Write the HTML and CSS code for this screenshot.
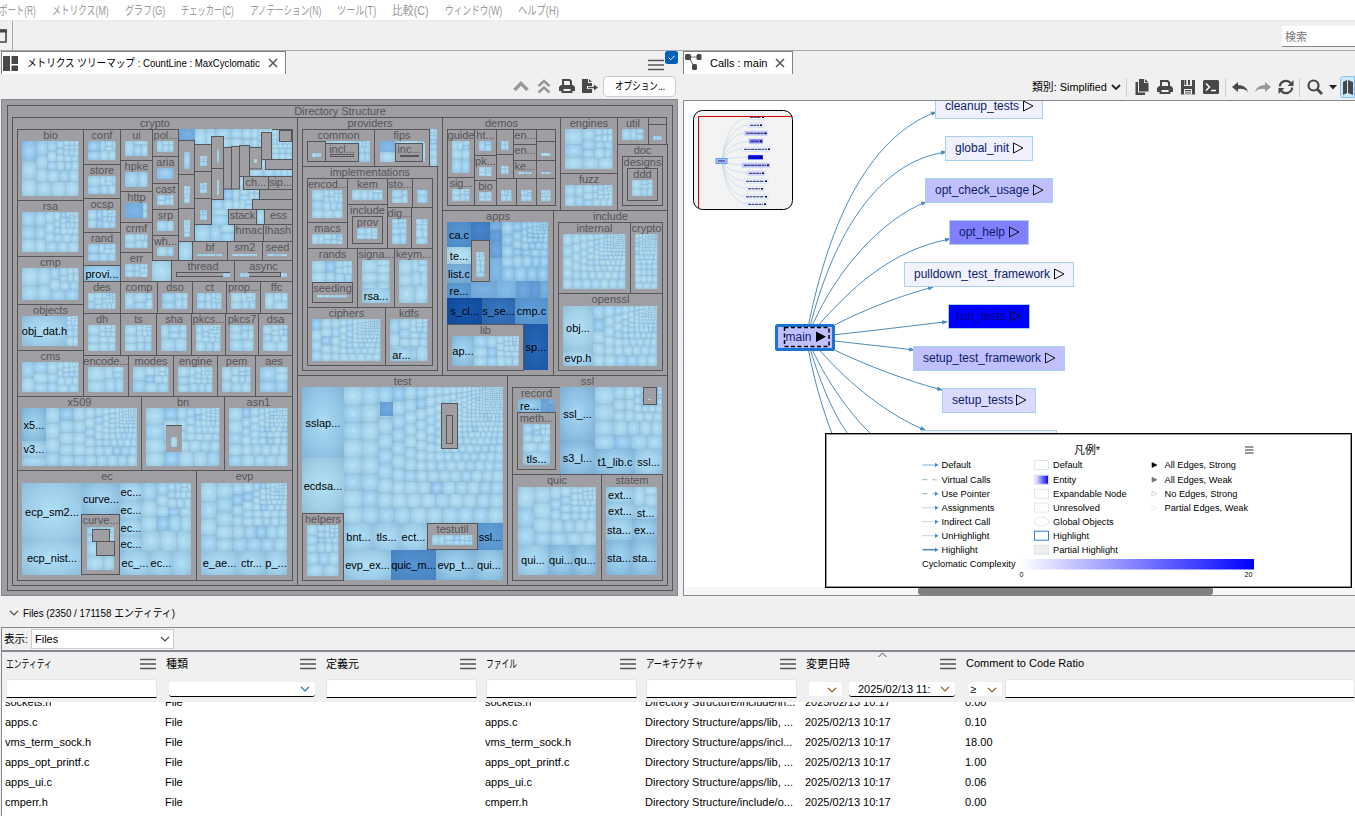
FILE: index.html
```html
<!DOCTYPE html>
<html lang="ja">
<head>
<meta charset="utf-8">
<title>Understand</title>
<link rel="stylesheet" href="styles.css">
</head>
<body>
<svg class="defs" width="0" height="0">
  <defs>
    <symbol id="i-print" viewBox="0 0 16 16"><path d="M3 7V1h8l2 2v4h-2V4L10 3H5v4zM2 7h12l2 2v4h-2.500v2h-11v-2H0V9zm2.500 4v2h7v-2z" fill-rule="evenodd"/></symbol>
    <symbol id="i-x" viewBox="0 0 10 10"><path d="M1 1l8 8M9 1l-8 8" fill="none" stroke="#555" stroke-width="1.500"/></symbol>
    <symbol id="i-menu" viewBox="0 0 16 12"><path d="M0 1.500h16M0 6h16M0 10.500h16" stroke="#555" stroke-width="1.600"/></symbol>
    <symbol id="i-down" viewBox="0 0 10 6"><path d="M1 .8l4 4 4-4" fill="none" stroke="currentColor" stroke-width="1.200"/></symbol>
    <radialGradient id="shade" cx=".5" cy=".5" r=".7"><stop offset="0" stop-color="#c0ecff" stop-opacity=".65"/><stop offset=".55" stop-color="#a4d0e6" stop-opacity=".3"/><stop offset="1" stop-color="#5c8ca8" stop-opacity=".3"/></radialGradient>
    <radialGradient id="shade-deep" cx=".5" cy=".5" r=".7"><stop offset="0" stop-color="#9cf" stop-opacity=".12"/><stop offset="1" stop-color="#234" stop-opacity=".1"/></radialGradient>
    <linearGradient id="ramp"><stop offset="0" stop-color="#fff"/><stop offset="1" stop-color="#00f"/></linearGradient>
    <marker id="arrow" viewBox="0 0 6 6" refX="5" refY="3" markerWidth="6" markerHeight="6" orient="auto" markerUnits="userSpaceOnUse"><path d="M0 .8L6 3 0 5.200z" fill="#4c8cbc"/></marker>
  </defs>
</svg>
<nav class="menubar">
  <span class="cut" data-w="37">ポート(R)</span><span data-w="57">メトリクス(M)</span><span data-w="40">グラフ(G)</span><span data-w="53">チェッカー(C)</span><span data-w="71">アノテーション(N)</span><span data-w="39">ツール(T)</span><span data-w="37">比較(C)</span><span data-w="57">ウィンドウ(W)</span><span data-w="41">ヘルプ(H)</span>
</nav>
<div class="mainbar">
  <div class="dockicon"><svg width="8" height="14"><path d="M0 1h6v12H0" fill="none" stroke="#444" stroke-width="1.600"/><path d="M0 2h6.800" stroke="#444" stroke-width="3"/></svg></div>
  <div class="search"><span data-w="22">検索</span></div>
</div>
<main class="panes">
  <section class="pane left">
    <div class="tabs">
      <div class="tab tab-map">
        <svg width="15" height="15"><path d="M0 0h7v15H0zM8.500 0H15v8H8.500zM8.500 9.500H15V15H8.500z" fill="#484848"/></svg>
        <span data-w="233">メトリクス ツリーマップ : CountLine : MaxCyclomatic</span>
        <svg width="10" height="10"><use href="#i-x"/></svg>
      </div>
      <div class="tabend"><svg class="ham" width="16" height="12"><use href="#i-menu"/></svg><svg width="13" height="13"><rect width="13" height="13" rx="2.500" fill="#005fb8"/><path d="M3.500 6.500l2.200 2.200 4-4" fill="none" stroke="#fff"/></svg></div>
    </div>
    <div class="tools">
      <svg width="16" height="16"><path d="M1.500 12L8 5.500l6.500 6.500" fill="none" stroke="#999" stroke-width="3.400"/></svg>
      <svg width="16" height="16"><path d="M2.500 8L8 3l5.500 5M2.500 14.500L8 9.500l5.500 5" fill="none" stroke="#999" stroke-width="2.600"/></svg>
      <svg width="16" height="16" fill="#484848"><use href="#i-print"/></svg>
      <svg width="16" height="16" fill="#484848"><path d="M0 1h6v4h4v3H5v3h5v4H0zM7 1l3 3H7z"/><path d="M6 8.800h6V6.500l4 3-4 3v-2.200H6z"/></svg>
      <button class="opt"><span data-w="50">オプション...</span></button>
    </div>
    <svg id="treemap" width="677" height="497" viewBox="1 99 677 497"></svg>
  </section>
  <section class="pane right">
    <div class="tabs">
      <div class="tab tab-calls">
        <svg class="up" width="17" height="17" fill="#484848"><path d="M2.500 4h12M3.500 4l6 10" stroke="#777" stroke-width="1.200"/><rect x="0" y="1" width="6" height="6" rx="1.500"/><rect x="11.500" y="1" width="5" height="6" rx="1.500"/><rect x="7" y="11" width="5" height="6" rx="1.500"/></svg>
        <span data-w="57">Calls : main</span>
        <svg width="10" height="10"><use href="#i-x"/></svg>
      </div>
    </div>
    <div class="tools rtools">
      <span data-w="75">類別: Simplified</span>
      <svg class="g4" width="10" height="7"><path d="M1 1l4 4 4-4" fill="none" stroke="#222" stroke-width="1.800"/></svg>
      <i class="sep s1"></i>
      <svg width="16" height="16" fill="#484848"><path d="M5 0h5v4h4.500v8.500H5zM11 0l3.500 3.300H11zM1.500 3H4v10.500h7V16H1.500z"/></svg>
      <svg width="16" height="16" fill="#484848"><use href="#i-print"/></svg>
      <svg width="16" height="16"><path d="M1 1h14v14.500H1z" fill="#484848"/><path d="M4 1h8v6H4zM4 10h8v5.500H4z" fill="#eee"/><path d="M4.500 1h1.800v5H4.500zM8 1h2v5H8zM5 11h6v1.200H5zM5 13.500h6v1H5z" fill="#484848"/></svg>
      <svg width="16" height="16"><rect y="1" width="16" height="14" rx="1.500" fill="#484848"/><path d="M3 4.500L6.500 8 3 11.500M8 11.500h5" fill="none" stroke="#fff" stroke-width="1.500"/></svg>
      <i class="sep s2"></i>
      <svg width="16" height="16"><path d="M0 8l6-5v3q8 0 10 7-4-4-10-3v3z" fill="#484848"/></svg>
      <svg width="16" height="16"><path d="M16 8l-6-5v3Q2 6 0 13q4-4 10-3v3z" fill="#999"/></svg>
      <svg width="16" height="16"><path d="M1.800 7.500a6.300 6.300 0 0 1 11-3.500M14.200 8.500a6.300 6.300 0 0 1-11 3.500" fill="none" stroke="#484848" stroke-width="2.200"/><path d="M15.500 1v6h-6zM.5 15V9h6z" fill="#484848"/></svg>
      <i class="sep s3"></i>
      <svg width="16" height="16"><circle cx="6.500" cy="6.500" r="5" fill="none" stroke="#484848" stroke-width="2.200"/><path d="M10 10l5 5" stroke="#484848" stroke-width="2.800"/></svg>
      <svg class="car" width="8" height="5"><path d="M0 0h8L4 4.500z" fill="#222"/></svg>
      <div class="mapbtn"><svg width="16" height="16" fill="#484848"><path d="M0 3l4-2v13l-4 2zM5 1l5 2v13l-5-2zM11 3l5-2v13l-5 2z"/></svg></div>
    </div>
    <svg id="graph" width="672" height="496" viewBox="683 100 672 496"></svg>
  </section>
</main>
<section class="files">
  <h2><svg width="10" height="6"><use href="#i-down"/></svg><span data-w="152">Files (2350 / 171158 エンティティ)</span></h2>
  <div class="show"><span data-w="24">表示:</span><div class="select">Files<svg width="10" height="6"><use href="#i-down"/></svg></div></div>
  <div id="head" class="head"></div>
  <div id="rows" class="rows"></div>
</section>
<script src="script.js"></script>
</body>
</html>
```
FILE: styles.css
```css
* { box-sizing: border-box; }
body {
  margin: 0;
  width: 1355px;
  height: 816px;
  overflow: hidden;
  background: #f0f0f0;
  color: #000;
  font: 11px/14px "Liberation Sans", "Noto Sans CJK JP", sans-serif;
}
svg { display: block; flex: none; }
.defs { position: absolute; }
text { font-family: "Liberation Sans", "Noto Sans CJK JP", sans-serif; }
[data-w] { display: block; flex: none; white-space: nowrap; }
[data-w] > span { display: inline-block; transform-origin: 0 50%; }

.menubar { display: flex; gap: 16px; height: 21px; padding-top: 4px; background: #fff; color: #999; border-bottom: 1px solid #e8e8e8; font-size: 12px; }
.cut { margin-left: -1px; }
.mainbar { display: flex; justify-content: space-between; height: 30px; border-bottom: 1px solid #a8a8a8; }
.dockicon { width: 13px; padding-top: 8px; border-right: 1px solid #a8a8a8; }
.search { width: 73px; height: 21px; margin-top: 5px; padding: 4px 3px; background: #fff; border-bottom: 1px solid #868686; color: #777; }

.panes { display: flex; gap: 5px; height: 545px; padding-left: 1px; }
.left { width: 677px; }
.right { width: 672px; }
.tabs { display: flex; justify-content: space-between; height: 23px; }
.tab { display: flex; align-items: center; background: #fff; border: 1px solid #828282; border-bottom: 0; }
.tab-map { width: 285px; padding-left: 1px; gap: 8px; }
.tab-map > svg:first-child { margin-right: 1px; }
.tab-calls { width: 110px; padding-left: 1px; gap: 8px; }
.up { align-self: flex-start; margin-top: 1px; }
.tabend { display: flex; gap: 1px; }
.ham { margin-top: 8px; }
.tools { display: flex; align-items: center; justify-content: flex-end; gap: 7px; height: 25px; padding-right: 2px; }
.left .tools { padding-bottom: 1px; }
.opt { width: 73px; height: 21px; margin-left: -2px; padding: 0 0 0 11px; background: #fdfdfd; border: 1px solid #ccc; border-radius: 4px; font: inherit; text-align: left; }
.rtools { height: 26px; justify-content: flex-start; padding: 0 0 0 349px; }
.g4 { margin-left: -3px; }
.sep { width: 1px; height: 19px; background: #ccc; }
.s1 { margin-left: -2px; }
.s2 { margin-left: -1px; }
.s3 { margin-left: -2px; }
.car { margin-left: -1px; }
.mapbtn { width: 20px; height: 22px; padding: 2px; margin-left: -4px; background: #cce8ff; border: 1px solid #84c2f0; border-radius: 3px 0 0 3px; overflow: hidden; }

.files { display: flex; flex-direction: column; height: 220px; }
.files h2 { display: flex; align-items: center; gap: 4px; height: 31px; margin: 0; padding: 2px 0 0 9px; font: inherit; }
h2 svg, .select svg { color: #444; }
.show { display: flex; align-items: center; gap: 3px; height: 25px; margin-left: 1px; padding-left: 2px; border: solid #828790; border-width: 1px 0 2px 1px; }
.select { display: flex; align-items: center; justify-content: space-between; width: 143px; height: 20px; padding: 0 3px; background: #fff; border: 1px solid #ccc; }
.head { display: flex; height: 50px; margin-left: 1px; border-left: 1px solid #828790; padding: 5px 0 0 4px; }
.col { flex: none; width: 160px; }
.col:last-child { width: 389px; }
.cap { display: flex; justify-content: space-between; align-items: center; height: 14px; width: 150px; }
.col:last-child .cap { height: 11px; }
.field { width: 151px; height: 19px; margin-top: 8px; background: #fff; border: 1px solid #e5e5e5; border-bottom-color: #000; border-radius: 3px 3px 0 0; }
.pick { display: flex; align-items: center; justify-content: flex-end; width: 146px; height: 15px; margin: 11px 0 0 3px; padding-right: 5px; background: #fff; border-bottom: 1px solid #000; border-radius: 3px; color: #1c6ea5; }
.duo { display: flex; gap: 7px; height: 27px; }
.op { display: flex; flex: none; align-items: center; justify-content: space-between; width: 33px; height: 14px; margin: 11px 0 0 3px; padding: 2px 5px 0 1px; background: #fff; border-radius: 3px; color: #8a5a1c; }
.op b, .date b { color: #000; font-weight: 400; }
.op b { margin-top: -3px; }
.date { display: flex; align-items: center; justify-content: space-between; width: 106px; height: 15px; margin-top: 11px; padding: 0 5px 0 9px; background: #fff; border-bottom: 1px solid #000; border-radius: 3px; color: #8a5a1c; }
.duo .field { width: 360px; margin-left: -4px; }
.col:last-child .duo { margin-top: 3px; }
.sort { position: absolute; left: 877px; top: 652px; }
.rows { height: 114px; margin-left: 1px; background: #fff; border-left: 1px solid #828790; overflow: hidden; }
.row { display: flex; height: 20px; line-height: 20px; padding-left: 3px; }
.row:first-child { margin-top: -10px; }
.row span { width: 160px; flex: none; white-space: nowrap; }
```
FILE: script.js
```js
function fit(root) {
  root.querySelectorAll('[data-w]').forEach(el => {
    const s = document.createElement('span');
    s.textContent = el.textContent;
    el.textContent = '';
    el.append(s);
    const w = +el.dataset.w;
    const k = w / s.offsetWidth;
    s.style.transform = `scaleX(${k})`;
    el.style.width = w + 'px';
  });
}

// ---------- treemap ----------
const out = [];
let seed = 7;
const rnd = () => (seed = (seed * 16807) % 2147483647) / 2147483647;
const rect = (x, y, w, h, a) => out.push(`<rect x="${x.toFixed(1)}" y="${y.toFixed(1)}" width="${w.toFixed(1)}" height="${h.toFixed(1)}" ${a}/>`);
const label = (x, y, t, c) => out.push(`<text x="${x}" y="${y}" font-size="11" text-anchor="middle" fill="${c}">${t}</text>`);
const PALE = ['#a8d6ee', '#a6d4ec', '#a0d2f0', '#aad8ee', '#9ccef0'];
const BLUE = ['#6aa6de', '#76b0e2', '#629edA', '#80bcea', '#70aae2'];

function cell(x, y, w, h, color) {
  const deep = parseInt(color.slice(1, 3), 16) < 0x84;
  rect(x, y, w, h, `fill="${color}"`);
  rect(x, y, w, h, `fill="url(#shade${deep ? '-deep' : ''})"`);
}
function cells(x1, y1, x2, y2, n = 1, pal = PALE) {
  let x = x1, y = y1, w = x2 - x1, h = y2 - y1;
  const k = Math.log(n + 1) * 0.85;
  let ws = Array.from({ length: n }, (_, i) => Math.exp(-k * i / n));
  const sum = ws.reduce((a, b) => a + b, 0);
  ws = ws.map(v => v * w * h / sum);
  while (ws.length) {
    const side = Math.min(w, h);
    let best = Infinity, m = 0, s = 0;
    for (let i = 0; i < ws.length; i++) {
      s += ws[i];
      const t = s / side;
      const r = Math.max(t * t / ws[i], ws[0] / (t * t));
      if (r > best) { s -= ws[i]; break; }
      best = r; m = i + 1;
    }
    const t = s / side;
    let p = 0;
    for (const a of ws.slice(0, m)) {
      const l = a / t;
      const c = rnd() < 0.025 && pal === PALE ? '#8cc2ee' : pal[Math.floor(rnd() * pal.length)];
      if (w > h) cell(x, y + p, t, l, c);
      else cell(x + p, y + h - t, l, t, c);
      p += l;
    }
    if (w > h) { x += t; w -= t; } else h -= t;
    ws = ws.slice(m);
  }
}
function box(x1, y1, x2, y2, name = '', n = 0) {
  rect(x1, y1, x2 - x1, y2 - y1, 'fill="#9f9ea3" stroke="#565659"');
  if (name) label((x1 + x2) / 2, y1 + 9.5, name, '#555558');
  if (n) cells(x1 + 4.5, y1 + 11.5, x2 - 5, y2 - 4.5, n);
}
function leaf(x1, y1, x2, y2, name = '', color = '#9fd0ee') {
  cell(x1, y1, x2 - x1, y2 - y1, color);
  if (name) label((x1 + x2) / 2, (y1 + y2) / 2 + 4, name, '#000');
}
const B = list => list.forEach(a => box(...a));
const C = list => list.forEach(a => cells(...a));
const L = list => list.forEach(a => leaf(...a));

rect(1.5, 99.5, 676, 496, 'fill="#9f9ea3" stroke="#828790"');
B([[7.5, 105.5, 672.5, 590.5, 'Directory Structure'], [12.5, 117.5, 297.5, 585.5, 'crypto'],
  [17.5, 129.5, 292.5, 580.5],
  [17.5, 129.5, 83.5, 200.5, 'bio', 32], [17.5, 200.5, 83.5, 256.5, 'rsa', 36], [17.5, 256.5, 83.5, 304.5, 'cmp', 16],
  [17.5, 304.5, 83.5, 350.5, 'objects'], [17.5, 350.5, 83.5, 396.5, 'cms', 25],
  [83.5, 129.5, 120.5, 164.5, 'conf', 8], [83.5, 164.5, 120.5, 198.5, 'store', 8], [83.5, 198.5, 120.5, 232.5, 'ocsp', 14],
  [83.5, 232.5, 120.5, 265.5, 'rand', 9], [83.5, 281.5, 120.5, 313.5, 'des', 20], [83.5, 313.5, 120.5, 355.5, 'dh', 15],
  [83.5, 355.5, 128.5, 396.5, 'encode...', 7],
  [120.5, 129.5, 152.5, 160.5, 'ui', 4], [120.5, 160.5, 152.5, 191.5, 'hpke', 2], [120.5, 191.5, 152.5, 222.5, 'http'],
  [120.5, 222.5, 152.5, 252.5, 'crmf', 7], [120.5, 252.5, 152.5, 281.5, 'err', 9],
  [152.5, 129.5, 178.5, 156.5, 'pol...', 5], [152.5, 156.5, 178.5, 183.5, 'aria', 1], [152.5, 183.5, 178.5, 209.5, 'cast', 6],
  [152.5, 209.5, 178.5, 235.5, 'srp', 2], [152.5, 235.5, 178.5, 260.5, 'wh...', 2],
  [120.5, 281.5, 157.5, 313.5, 'comp', 5], [157.5, 281.5, 192.5, 313.5, 'dso', 6], [192.5, 281.5, 226.5, 313.5, 'ct', 12],
  [226.5, 281.5, 260.5, 313.5, 'prop...', 8], [260.5, 281.5, 292.5, 313.5, 'ffc', 4],
  [120.5, 313.5, 156.5, 355.5, 'ts', 14], [156.5, 313.5, 191.5, 355.5, 'sha', 7], [191.5, 313.5, 225.5, 355.5, 'pkcs...', 20],
  [225.5, 313.5, 258.5, 355.5, 'pkcs7', 8], [258.5, 313.5, 292.5, 355.5, 'dsa', 12],
  [128.5, 355.5, 173.5, 396.5, 'modes', 12], [173.5, 355.5, 217.5, 396.5, 'engine', 22], [217.5, 355.5, 255.5, 396.5, 'pem', 12],
  [255.5, 355.5, 292.5, 396.5, 'aes', 5],
  [17.5, 396.5, 141.5, 470.5, 'x509'], [141.5, 396.5, 224.5, 470.5, 'bn', 50], [224.5, 396.5, 292.5, 470.5, 'asn1', 75],
  [17.5, 470.5, 196.5, 580.5, 'ec'], [196.5, 470.5, 292.5, 580.5, 'evp']]);
C([[67, 316, 78, 346, 14], [46, 408, 137, 466, 100], [142, 483, 191, 551, 26], [201, 483, 287, 551, 75]]);
L([[22, 316, 67, 346, 'obj_dat.h'], [84, 266, 120, 281, 'provi...', '#94cbf2'], [125, 203, 143, 218, '', '#79b6ea'], [143, 203, 147, 211], [143, 211, 147, 218],
  [22, 408, 46, 441, 'x5...', '#85bde2'], [22, 441, 46, 457, 'v3...'], [22, 457, 46, 466],
  [22, 483, 82, 541, 'ecp_sm2...'], [22, 541, 82, 575, 'ecp_nist...'], [82, 483, 120, 514, 'curve...', '#92c5e8'],
  [120, 483, 142, 501, 'ec...'], [120, 501, 142, 519, 'ec...'], [120, 519, 142, 536, 'ec...'], [120, 536, 142, 551, 'ec...'],
  [120, 551, 150, 575, 'ec_...'], [150, 551, 172, 575, 'ec...'], [172, 551, 191, 575],
  [201, 551, 238, 575, 'e_ae...'], [238, 551, 265, 575, 'ctr...'], [265, 551, 287, 575, 'p_...']]);
rect(166, 425, 16, 27, 'fill="#9f9ea3"');
out.push('<path d="M166 425.500h16" stroke="#565659"/>');
B([[81.5, 514.5, 119.5, 574.5, 'curve...']]);
C([[171, 437, 177, 447, 1], [87, 527, 114, 542, 8], [87, 542, 114, 556, 3], [87, 556, 114, 570, 2]]);
B([[92.5, 529.5, 109.5, 541.5], [96.5, 541.5, 114.5, 555.5]]);

// packed corner of crypto
rect(179, 130, 113, 131, 'fill="#9f9ea3"');
C([[195, 129, 272, 147, 18], [272, 130, 292, 160, 40], [249, 169, 292, 176, 5], [240, 176, 243, 189, 1], [224, 189, 259, 200, 8],
  [212, 200, 252, 210, 6], [212, 209, 228, 225, 2], [257, 210, 264, 225, 1], [195, 225, 234, 242, 4], [179, 242, 192, 261, 1],
  [152, 261, 171, 281, 1], [261, 159, 266, 169, 1]]);
L([[179, 129, 195, 140, '', '#72afe4']]);
B([[178.5, 140.5, 194.5, 174.5], [178.5, 174.5, 194.5, 208.5], [178.5, 208.5, 194.5, 241.5],
  [194.5, 144.5, 211.5, 171.5], [194.5, 171.5, 211.5, 198.5], [194.5, 198.5, 211.5, 224.5],
  [211.5, 136.5, 223.5, 168.5], [211.5, 168.5, 223.5, 199.5], [223.5, 147.5, 231.5, 189], [231.5, 146.5, 239.5, 189],
  [239.5, 145.5, 249.5, 176.5], [249.5, 147.5, 261.5, 169], [261.5, 132.5, 271.5, 159.5], [279.5, 130.5, 291.5, 141.5],
  [265.5, 159.5, 292.5, 169.5], [243.5, 176.5, 268.5, 189.5, 'ch...'], [268.5, 176.5, 292.5, 189.5, 'sip...'],
  [259.5, 189.5, 292.5, 199.5], [252.5, 199.5, 292.5, 209.5], [228.5, 209.5, 256.5, 224.5, 'stack'], [264.5, 209.5, 292.5, 224.5, 'ess'],
  [234.5, 224.5, 263.5, 241.5, 'hmac'], [263.5, 224.5, 292.5, 241.5, 'lhash'],
  [192.5, 241.5, 227.5, 260.5, 'bf'], [227.5, 241.5, 262.5, 260.5, 'sm2'], [262.5, 241.5, 292.5, 260.5, 'seed'],
  [171.5, 260.5, 234.5, 281.5, 'thread'], [234.5, 260.5, 292.5, 281.5, 'async'], [176.5, 272.5, 229.5, 276.5], [248.5, 272.5, 280.5, 276.5]]);
C([[184, 152, 190, 169, 1], [184, 186, 190, 203, 6], [184, 220, 190, 237, 7], [200, 156, 207, 166, 8], [200, 183, 207, 193, 8],
  [200, 210, 207, 220, 6], [217, 149, 219, 163, 1], [217, 180, 219, 195, 4], [254, 159, 257, 163, 1],
  [197, 254, 222, 256, 10], [232, 254, 257, 256, 6], [267, 254, 287, 256, 4], [223, 273, 230, 277, 2], [240, 273, 249, 277, 3], [281, 273, 287, 277, 2]]);

// providers, demos, engines, fuzz, util, doc
B([[297.5, 117.5, 442.5, 375.5, 'providers'], [302.5, 129.5, 374.5, 166.5, 'common'], [374.5, 129.5, 429.5, 166.5, 'fips'],
  [307.5, 141.5, 325.5, 161.5], [302.5, 166.5, 437.5, 370.5, 'implementations'],
  [307.5, 178.5, 347.5, 222.5, 'encod...', 18], [307.5, 222.5, 347.5, 248.5, 'macs', 10], [347.5, 178.5, 387.5, 204.5, 'kem', 6],
  [347.5, 204.5, 387.5, 248.5, 'include'], [352.5, 216.5, 382.5, 243.5, 'prov', 8], [387.5, 178.5, 412.5, 207.5, 'sto...', 4],
  [412.5, 178.5, 432.5, 207.5, '', 2], [387.5, 207.5, 411.5, 248.5, 'dig...', 10], [411.5, 207.5, 432.5, 248.5, '', 8],
  [307.5, 248.5, 357.5, 307.5, 'rands'], [312.5, 282.5, 352.5, 302.5, 'seeding'], [357.5, 248.5, 394.5, 307.5, 'signa...', 7],
  [394.5, 248.5, 432.5, 307.5, 'keym...', 9], [307.5, 307.5, 385.5, 365.5, 'ciphers', 110], [385.5, 307.5, 432.5, 365.5, 'kdfs', 20],
  [442.5, 117.5, 560.5, 210.5, 'demos'], [447.5, 129.5, 474.5, 177.5, 'guide', 8], [447.5, 177.5, 474.5, 205.5, 'sig...', 7],
  [474.5, 129.5, 496.5, 155.5, 'ht...', 3], [474.5, 155.5, 496.5, 180.5, 'pk...', 6], [474.5, 180.5, 496.5, 205.5, 'bio', 6],
  [496.5, 129.5, 513.5, 154.5, '', 4], [496.5, 154.5, 513.5, 178.5, '', 4], [513.5, 129.5, 536.5, 144.5, 'en...'],
  [513.5, 144.5, 536.5, 160.5, 'en...'], [513.5, 160.5, 536.5, 178.5, 'ke...', 3], [536.5, 129.5, 555.5, 141.5],
  [536.5, 141.5, 555.5, 160.5, '', 1], [536.5, 160.5, 555.5, 178.5, '', 4], [496.5, 178.5, 516.5, 205.5, '', 6],
  [516.5, 178.5, 536.5, 205.5, '', 6], [536.5, 178.5, 555.5, 205.5, '', 9],
  [560.5, 117.5, 617.5, 173.5, 'engines', 18], [560.5, 173.5, 617.5, 210.5, 'fuzz', 24], [617.5, 117.5, 648.5, 144.5, 'util', 4],
  [648.5, 117.5, 666.5, 124.5], [648.5, 124.5, 666.5, 144.5, '', 3], [617.5, 144.5, 667.5, 210.5, 'doc'],
  [622.5, 156.5, 662.5, 205.5, 'designs'], [627.5, 168.5, 657.5, 200.5, 'ddd', 8]]);
C([[312, 153, 321, 157, 3], [326, 141, 359, 144, 1], [359, 141, 370, 162, 8], [380, 152, 395, 162, 1], [395, 141, 424, 144, 1],
  [423, 143, 425, 162, 1], [430, 129, 437, 166, 8], [312, 261, 352, 282, 12], [317, 295, 347, 297.5, 8]]);
L([[380, 141, 395, 152, '', '#82bdeb'], [362, 288, 390, 303, 'rsa...'], [390, 348, 413, 361, 'ar...']]);
B([[325.5, 143.5, 358.5, 161.5, 'incl...'], [330.5, 154.5, 353.5, 156.5], [395.5, 143.5, 422.5, 161.5, 'inc...'], [400.5, 155.5, 418.5, 156.5]]);

// apps and include
B([[442.5, 210.5, 553.5, 375.5, 'apps'], [553.5, 210.5, 667.5, 375.5, 'include'], [558.5, 222.5, 630.5, 293.5, 'internal', 130],
  [630.5, 222.5, 662.5, 293.5, 'crypto', 100], [558.5, 293.5, 662.5, 370.5, 'openssl']]);
C([[490, 222, 502, 281, 4, BLUE], [502, 222, 548, 281, 52, ['#88c2ec', '#90c8ee', '#98ccec', '#86beea']], [471, 281, 548, 298, 5, BLUE], [593, 306, 657, 366, 100]]);
L([[447, 222, 471, 247, 'ca.c', '#4e92d2'], [471, 222, 490, 240, '', '#3f7fc6'], [447, 247, 471, 264, 'te...', '#b2dcee'],
  [447, 264, 471, 283, 'list.c', '#7ab2dd'], [447, 283, 471, 298, 're...', '#5a9bd6'], [447, 298, 482, 324, 's_cl...', '#0a4ba4'],
  [482, 298, 515, 324, 's_se...', '#2c6cb8'], [515, 298, 548, 324, 'cmp.c', '#5a9ad8'], [524, 324, 548, 370, 'sp...', '#1a5cb0'],
  [563, 306, 593, 350, 'obj...', '#a4d3ea'], [563, 350, 593, 366, 'evp.h']]);
B([[471.5, 240.5, 489.5, 281.5, '', 12], [447.5, 324.5, 523.5, 370.5, 'lib']]);
C([[474, 336, 519, 366, 26]]);
L([[452, 336, 474, 366, 'ap...', '#8cc0e6']]);

// test
B([[297.5, 375.5, 507.5, 585.5, 'test'], [302.5, 513.5, 343.5, 580.5, 'helpers', 24]]);
C([[344, 387, 503, 523, 330]]);
L([[302, 387, 344, 458, 'sslap...', '#90c5ea'], [302, 458, 344, 513, 'ecdsa...', '#a4d3ea'], [380, 402, 393, 416, '', '#69a7e0'],
  [344, 523, 373, 550, 'bnt...'], [373, 523, 400, 550, 'tls...'], [400, 523, 427, 550, 'ect...'], [477, 523, 503, 550, 'ssl...', '#5c9cd8'],
  [344, 550, 391, 580, 'evp_ex...'], [391, 550, 436, 580, 'quic_m...', '#4c8cce'], [436, 550, 475, 580, 'evp_t...', '#86bce4'],
  [475, 550, 503, 580, 'qui...', '#8cc0e6']]);
B([[427.5, 523.5, 477.5, 549.5, 'testutil', 14], [441.5, 403.5, 457.5, 448.5], [446.5, 415.5, 452.5, 443.5]]);

// ssl
B([[507.5, 375.5, 667.5, 585.5, 'ssl'], [512.5, 387.5, 560.5, 474.5, 'record'], [517.5, 412.5, 555.5, 469.5, 'meth...'],
  [512.5, 474.5, 601.5, 580.5, 'quic'], [601.5, 474.5, 662.5, 580.5, 'statem']]);
C([[541, 399, 555, 412, 3, BLUE], [523, 424, 550, 452, 12], [595, 387, 662, 449, 40], [518, 487, 596, 545, 44], [634, 487, 657, 506, 3]]);
L([[518, 399, 541, 412, 're...', '#86bce6'], [523, 452, 550, 465, 'tls...'], [560, 387, 595, 441, 'ssl_...', '#86bce4'],
  [560, 441, 595, 474, 's3_l...', '#84b8e2'], [595, 449, 635, 474, 't1_lib.c', '#8cc0e6'], [635, 449, 662, 474, 'ssl...'],
  [518, 545, 548, 575, 'qui...'], [548, 545, 574, 575, 'qui...', '#86bce4'], [574, 545, 596, 575, 'qu...', '#8cc0e6'],
  [606, 487, 634, 503, 'ext...'], [606, 503, 634, 519, 'ext...'], [634, 506, 657, 519, 'st...'], [606, 519, 632, 540, 'sta...'],
  [632, 519, 657, 540, 'ex...', '#8cc0e6'], [606, 540, 632, 575, 'sta...', '#86bce4'], [632, 540, 657, 575, 'sta...', '#8cc0e6']]);
B([[643.5, 387.5, 656.5, 404.5]]);
cells(648, 399, 651, 400, 1);
document.getElementById('treemap').innerHTML = out.join('');

// ---------- call graph ----------
const g = [];
g.push('<rect x="683" y="100" width="672" height="496" fill="#fff"/>');
[[808.7, 324, 823, 255, 855, 142, 936, 112], [810.7, 324, 830, 250, 870, 163, 946, 152], [813, 324, 836, 272, 880, 220, 926, 202],
  [819.5, 324, 850, 290, 890, 250, 950, 239], [834.5, 325, 868, 308, 900, 296, 933, 287], [835, 334.7, 870, 331, 910, 326, 947, 321.7],
  [835, 341, 860, 344, 890, 347, 914, 350], [834.5, 350, 868, 366, 905, 380, 942, 390], [819.5, 350, 850, 385, 890, 416, 925, 430],
  [812.5, 350, 828, 383, 850, 414, 871, 434], [810.5, 350, 821, 385, 834, 415, 848, 434], [808.5, 350, 815, 385, 824, 412, 832, 434]
].forEach((p, i) => g.push(`<path d="M${p[0]} ${p[1]}C${p.slice(2).join(' ')}" fill="none" stroke="#4c8cbc"${i < 9 ? ' marker-end="url(#arrow)"' : ''}/>`));
const nodes = [['cleanup_tests', 935.5, 94, 1042.5, '#f0f0ff'], ['global_init', 945.5, 136, 1032.5, '#f0f0ff'],
  ['opt_check_usage', 925.5, 178, 1052.5, '#c0c0ff'], ['opt_help', 949.5, 220, 1028.5, '#8080ff'],
  ['pulldown_test_framework', 904.5, 262, 1073.5, '#f2f2ff'], ['run_tests', 948.5, 304, 1029.5, '#00f'],
  ['setup_test_framework', 913.5, 346, 1064.5, '#c0c0ff'], ['setup_tests', 942.5, 388, 1035.5, '#dadaff'], ['', 922, 430, 1056.5, '#f0f0ff']];
nodes.forEach(([t, x, y, x2, f]) => {
  g.push(`<rect x="${x}" y="${y + .5}" width="${x2 - x}" height="24" fill="${f}" stroke="#a9d0ee"/>`);
  if (t) g.push(`<text x="${x + (t === 'run_tests' ? 8 : 9.5)}" y="${y + 16}" font-size="12" fill="${f === '#00f' ? '#000075' : '#0c1c66'}">${t}</text><path d="M${x2 - 19} ${y + 7}v10l9.500-5z" fill="none" stroke="#111"/>`);
});
g.push(`<rect x="776.5" y="325.5" width="57" height="24" fill="#c0c0ff" stroke="#1b74d4" stroke-width="3" rx="1"/>
<rect x="784.5" y="327.500" width="44.500" height="19" fill="none" stroke="#000" stroke-width="1.500" stroke-dasharray="4 2.500"/>
<text x="785.5" y="341" font-size="12" fill="#0c1c66">main</text><path d="M816 331.500v10.500l10-5.200z"/>`);
// overview
g.push('<rect x="693.5" y="110.500" width="99" height="99" rx="9" fill="#f3f3f3" stroke="#000"/>');
[[748, 117, 17, '#f3f3f3'], [748, 125, 15, '#e8eefc'], [744.5, 133, 23, '#c0c0ff'], [749, 141, 14, '#8080ff'], [742, 149, 29, '#f0f4ff'], [748, 157, 15, '#00f'],
  [742, 165, 28, '#c0c0ff'], [747, 173, 18, '#dadaff'], [744, 181, 24, '#eef4ff'], [746, 188.5, 18, '#eef4ff'], [744, 196.5, 24, '#eef4ff'], [746, 204, 21, '#eef4ff']
].forEach(([x, y, w, f]) => {
  g.push(`<path d="M722 161Q726 ${y + (161 - y) * .1} ${x} ${y}" fill="none" stroke="#c6dbe8" stroke-width=".8"/><rect x="${x}" y="${y - 2}" width="${w}" height="4.500" fill="${f}" stroke="#bcd4f4" stroke-width=".4"/><path d="M${x + 2} ${y + .3}h${w - 6}" stroke="#226" stroke-width="1" stroke-dasharray="3 .5"/><path d="M${x + w - 3} ${y + .3}h2" stroke="#000" stroke-width="1.600"/>`);
});
g.push('<rect x="716" y="158.500" width="11" height="5" fill="#b0b8ff" stroke="#5aa0e8"/><path d="M718 161h7" stroke="#226"/><path d="M698.5 209V116.5H792" fill="none" stroke="#c00"/>');
// legend and scrollbar
g.push(`<rect x="684" y="587" width="671" height="8" fill="#f6f6f6"/><rect x="918" y="587" width="295" height="8" rx="3" fill="#808080"/>
<rect x="825.5" y="433.5" width="526" height="154" fill="#fff" stroke="#000"/><rect x="826.5" y="434.5" width="524" height="152" fill="none" stroke="#999"/>
<text x="1074" y="454" font-size="11" textLength="26" lengthAdjust="spacingAndGlyphs">凡例*</text><path d="M1245 447h8.500M1245 450h8.500M1245 453h8.500" stroke="#777" stroke-width="1.300"/>`);
const ly = [465, 479.7, 493.7, 507.7, 521.7, 535.7, 549.7, 563.7];
const lt = (x, i, t) => g.push(`<text x="${x}" y="${ly[i] + 3.3}" font-size="9.250">${t}</text>`);
['Default', 'Virtual Calls', 'Use Pointer', 'Assignments', 'Indirect Call', 'UnHighlight', 'Highlight'].forEach((t, i) => {
  const dash = ['none', '5 5', '5 5', '1 1', '1 1', '1 1', 'none'][i];
  g.push(`<path d="M922.500 ${ly[i]}h13" stroke="${i === 6 ? '#4c8cbc' : '#7fb0d2'}" stroke-width="${i === 6 ? 1.6 : 1}" stroke-dasharray="${dash}"/><path d="M935 ${ly[i] - 2.2}v4.400l3.500-2.200z" fill="${i === 1 ? '#dcebf5' : '#4c8cbc'}"/>`);
  lt(941.5, i, t);
});
['Default', 'Entity', 'Expandable Node', 'Unresolved', 'Global Objects', 'Highlight', 'Partial Highlight'].forEach((t, i) => {
  const a = i === 1 ? 'fill="url(#ramp)" stroke="#dde"' : i === 3 ? 'fill="#fff" stroke="#ddd" stroke-dasharray="2 1"' : i === 5 ? 'fill="#fff" stroke="#2b7fd0"' : i === 6 ? 'fill="#eee" stroke="#d5e6f2"' : 'fill="#fff" stroke="#d5e8f8"';
  g.push(i === 4 ? `<ellipse cx="1041.5" cy="${ly[i]}" rx="7" ry="4.500" ${a}/>` : `<rect x="1034.5" y="${ly[i] - 4.5}" width="14" height="9" ${a}/>`);
  lt(1053, i, t);
});
['All Edges, Strong', 'All Edges, Weak', 'No Edges, Strong', 'Partial Edges, Weak'].forEach((t, i) => {
  g.push(`<path d="M1152 ${ly[i] - 2.5}v5l5-2.500z" fill="${['#000', '#777', '#fff', '#fff'][i]}" stroke="${['#000', '#777', '#bbb', '#ddd'][i]}" stroke-width=".6"/>`);
  lt(1164.5, i, t);
});
lt(922, 7, 'Cyclomatic Complexity');
g.push('<rect x="1020" y="559" width="234" height="10.500" fill="url(#ramp)"/><text x="1019.500" y="576.500" font-size="7">0</text><text x="1244.500" y="576.500" font-size="7">20</text>');
g.push('<path d="M1355 100.500H683.5V595.5H1355" fill="none" stroke="#828790"/>');
document.getElementById('graph').innerHTML = g.join('');

// ---------- entity table ----------
const down = '<svg width="10" height="6"><use href="#i-down"/></svg>';
const ham = '<svg width="16" height="12"><use href="#i-menu"/></svg>';
const field = '<div class="field"></div>';
const cols = [['エンティティ', 46, field], ['種類', 22, `<div class="pick">${down}</div>`], ['定義元', 33, field], ['ファイル', 31, field], ['アーキテクチャ', 57, field],
  ['変更日時', 44, `<div class="duo"><div class="op"><b></b>${down}</div><div class="date"><b data-w="73">2025/02/13 11:</b>${down}</div></div>`],
  ['Comment to Code Ratio', 118, `<div class="duo"><div class="op"><b>≥</b>${down}</div>${field}</div>`]];
document.getElementById('head').innerHTML = cols.map(([t, w, f], i) =>
  `<div class="col"><div class="cap"><span data-w="${w}">${t}</span>${i < 6 ? ham : ''}</div>${f}</div>`).join('');
document.querySelector('.files').insertAdjacentHTML('beforeend', '<svg class="sort" width="11" height="6"><path d="M1.500 5l4-4 4 4" fill="none" stroke="#555"/></svg>');
document.getElementById('rows').innerHTML = [
  ['sockets.h', 'include/in...', '0.00'], ['apps.c', 'apps/lib, ...', '0.10'], ['vms_term_sock.h', 'apps/incl...', '18.00'],
  ['apps_opt_printf.c', 'apps/lib, ...', '1.00'], ['apps_ui.c', 'apps/lib, ...', '0.06'], ['cmperr.h', 'include/o...', '0.00']
].map(([f, d, r]) => `<div class="row"><span>${f}</span><span>File</span><span></span><span>${f}</span><span>Directory Structure/${d}</span><span>2025/02/13 10:17</span><span>${r}</span></div>`).join('');
fit(document);
```
